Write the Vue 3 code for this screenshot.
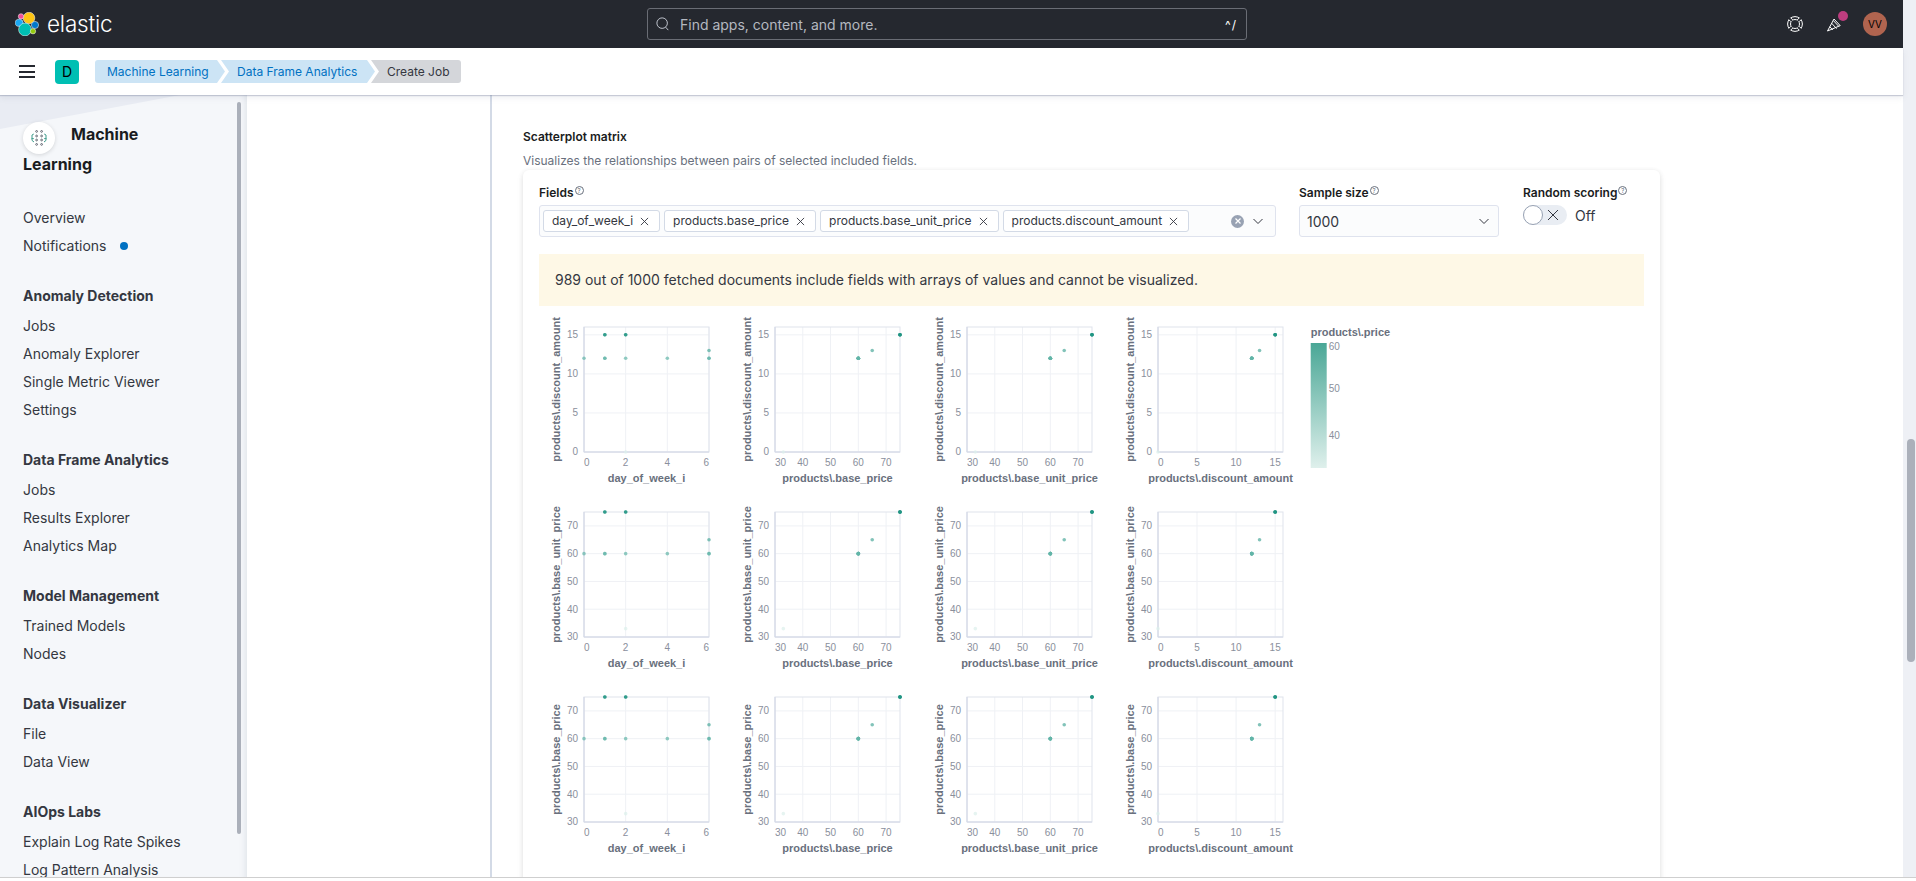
<template>
  <div class="app">
    <div class="window">
      <header class="topbar">
        <div class="brand">
          <svg class="logo" width="24" height="24" viewBox="0 0 24 24" stroke="#fff" stroke-width=".5">
            <circle cx="14" cy="6" r="5.8" fill="#fec514" />
            <circle cx="6" cy="4.4" r="2.7" fill="#f04e98" />
            <ellipse cx="4.2" cy="10.8" rx="4" ry="3.6" fill="#1ba9f5" />
            <circle cx="20" cy="13" r="3.6" fill="#0077cc" />
            <circle cx="10" cy="17.5" r="6.4" fill="#00bfb3" />
            <circle cx="18" cy="19.2" r="2.7" fill="#93c90e" />
          </svg>
          <span class="wordmark">elastic</span>
        </div>
        <div class="search">
          <svg width="14" height="14" viewBox="0 0 16 16" fill="none" stroke="#c5c9d2" stroke-width="1.1">
            <circle cx="7" cy="7" r="6" />
            <path d="M11 11.6 14 15" />
          </svg>
          <span class="search-text">Find apps, content, and more.</span>
          <span class="search-key">^/</span>
        </div>
        <div class="top-icons">
          <svg width="16" height="16" viewBox="0 0 16 16" fill="none" stroke="#fff" stroke-width="1">
            <circle cx="8" cy="8" r="7.4" />
            <circle cx="8" cy="8" r="4.5" />
            <path d="M5 5 2 2M11 5l3-3M5 11l-3 3M11 11l3 3" stroke="#25282f" stroke-width="2.2" />
            <path d="M5.74 3.9 3.62 1.78M3.9 5.74 1.78 3.62M10.26 3.9l2.12-2.12M12.1 5.74l2.12-2.12M5.74 12.1l-2.12 2.12M3.9 10.26l-2.12 2.12M10.26 12.1l2.12 2.12M12.1 10.26l2.12 2.12" />
          </svg>
          <div class="news">
            <svg width="16" height="16" viewBox="0 0 16 16" fill="none" stroke="#fff" stroke-width="1">
              <path d="M.5 15 7 3l6.2 6.6Z" />
              <path d="M4.6 7.2l5 5.4M2.8 10.8l3 3.2M6.4 4.6l5.4 5.8" />
            </svg>
            <span class="news-badge"></span>
          </div>
          <div class="avatar">VV</div>
        </div>
      </header>

      <div class="subbar">
        <button class="burger" aria-label="Menu"><span></span><span></span><span></span></button>
        <div class="space-tile">D</div>
        <nav class="crumbs">
          <a class="crumb first">Machine Learning</a>
          <a class="crumb mid">Data Frame Analytics</a>
          <span class="crumb last">Create Job</span>
        </nav>
      </div>

      <div class="body">
        <aside class="sidenav">
          <svg class="side-deco" width="180" height="36" viewBox="0 0 180 36">
            <polygon points="0,0 180,0 0,34" fill="#e9ecf3" />
          </svg>
          <div class="side-scroll"></div>
          <h2 class="side-title">
            <span class="ml-badge">
              <svg width="16" height="16" viewBox="0 0 16 16" fill="none">
                <g stroke="#4a4f5a" stroke-width=".8">
                  <circle cx="5.6" cy="1.4" r=".9" /><circle cx="10.6" cy="1.4" r=".9" />
                  <circle cx="5.6" cy="6" r=".9" /><circle cx="10.6" cy="6" r=".9" />
                  <circle cx="5.6" cy="10" r=".9" /><circle cx="10.6" cy="10" r=".9" />
                  <circle cx="5.6" cy="14.4" r=".9" /><circle cx="10.6" cy="14.4" r=".9" />
                </g>
                <path d="M2.8 4 1 5v5.4l2 1.6M13.2 4l1.8 1v5.4L13 12M.6 8.6h2.2M15.4 8.6h-2.2" stroke="#3f9c8c" stroke-width="1" />
              </svg>
            </span>Machine Learning
          </h2>
          <div v-for="group in navGroups" :key="group.title" class="side-group">
            <h3 v-if="group.title">{{ group.title }}</h3>
            <a v-for="item in group.items" :key="item" class="side-item">
              {{ item }}<i v-if="item === 'Notifications'" class="dot"></i>
            </a>
          </div>
        </aside>

        <main class="main">
          <div class="steps-col"></div>
          <section class="content">
            <h4 class="sec-title">Scatterplot matrix</h4>
            <p class="sec-desc">Visualizes the relationships between pairs of selected included fields.</p>

            <div class="card">
              <div class="controls">
                <div class="ctl ctl-fields">
                  <label>Fields<span class="hint">?</span></label>
                  <div class="combo">
                    <span v-for="f in fields" :key="f" class="chip">
                      {{ f }}
                      <svg width="9" height="9" viewBox="0 0 10 10" stroke="#343741" stroke-width="1"><path d="M1 1l8 8M9 1 1 9" /></svg>
                    </span>
                    <span class="combo-end">
                      <span class="clear">
                        <svg width="8" height="8" viewBox="0 0 8 8" stroke="#fff" stroke-width="1.2"><path d="M1.5 1.5l5 5M6.5 1.5l-5 5" /></svg>
                      </span>
                      <svg class="chev" width="12" height="12" viewBox="0 0 12 12" fill="none" stroke="#343741" stroke-width="1"><path d="M1.5 4 6 8.5 10.5 4" /></svg>
                    </span>
                  </div>
                </div>
                <div class="ctl ctl-sample">
                  <label>Sample size<span class="hint">?</span></label>
                  <div class="select">
                    1000
                    <svg class="chev" width="12" height="12" viewBox="0 0 12 12" fill="none" stroke="#343741" stroke-width="1"><path d="M1.5 4 6 8.5 10.5 4" /></svg>
                  </div>
                </div>
                <div class="ctl ctl-random">
                  <label>Random scoring<span class="hint">?</span></label>
                  <div class="switch-row">
                    <span class="switch">
                      <span class="knob"></span>
                      <svg width="12" height="12" viewBox="0 0 12 12" stroke="#343741" stroke-width="1"><path d="M1 1l10 10M11 1 1 11" /></svg>
                    </span>
                    <span class="switch-label">Off</span>
                  </div>
                </div>
              </div>

              <div class="callout">989 out of 1000 fetched documents include fields with arrays of values and cannot be visualized.</div>

              <div class="matrix">
                <template v-for="(row, r) in rows" :key="row.key">
                  <svg v-for="col in cols" :key="row.key + col.key" class="cell" width="191.33" height="185" viewBox="0 0 191.33 185">
                    <g transform="translate(45 10)">
                      <line v-for="t in col.ticks" :key="'x' + t" :x1="sx(col, t)" :x2="sx(col, t)" y1="0" y2="125" class="grid" />
                      <line v-for="t in row.ticks" :key="'y' + t" x1="0" x2="125" :y1="sy(row, t)" :y2="sy(row, t)" class="grid" />
                      <rect x="0" y="0" width="125" height="125" class="plot-frame" />
                      <line x1="0" x2="0" y1="0" y2="125" class="axis" />
                      <line x1="0" x2="125" y1="125" y2="125" class="axis" />
                      <circle v-for="(d, i) in docs" :key="i" :cx="sx(col, d[col.key])" :cy="sy(row, d[row.key])" r="1.8" :fill="colorFor(d.price)" opacity="0.7" />
                      <text v-for="(t, i) in col.ticks" :key="'xl' + t" :x="sx(col, t)" y="139" :text-anchor="xAnchor(col, i)" class="tick">{{ t }}</text>
                      <text v-for="t in row.ticks" :key="'yl' + t" x="-6" :y="sy(row, t) + 3.5" text-anchor="end" class="tick">{{ t }}</text>
                      <text x="62.5" y="155" text-anchor="middle" class="title">{{ col.label }}</text>
                      <text transform="translate(-24 62.5) rotate(-90)" text-anchor="middle" class="title">{{ row.label }}</text>
                    </g>
                  </svg>
                  <svg v-if="r === 0" class="cell" width="110" height="185" viewBox="0 0 110 185">
                    <defs>
                      <linearGradient id="legendGrad" x1="0" y1="0" x2="0" y2="1">
                        <stop offset="0" stop-color="#4aa796" />
                        <stop offset="1" stop-color="#dff0ec" />
                      </linearGradient>
                    </defs>
                    <text x="6.7" y="19" class="title">products\.price</text>
                    <rect x="6.7" y="26" width="16" height="125" fill="url(#legendGrad)" />
                    <text x="24.7" y="33.2" class="tick">60</text>
                    <text x="24.7" y="74.8" class="tick">50</text>
                    <text x="24.7" y="121.5" class="tick">40</text>
                  </svg>
                  <div v-else class="cell"></div>
                </template>
              </div>
            </div>
          </section>
        </main>
      </div>
    </div>

    <div class="page-scroll"><div class="page-thumb"></div></div>
  </div>
</template>

<script setup>
const navGroups = [
  { title: '', items: ['Overview', 'Notifications'] },
  { title: 'Anomaly Detection', items: ['Jobs', 'Anomaly Explorer', 'Single Metric Viewer', 'Settings'] },
  { title: 'Data Frame Analytics', items: ['Jobs', 'Results Explorer', 'Analytics Map'] },
  { title: 'Model Management', items: ['Trained Models', 'Nodes'] },
  { title: 'Data Visualizer', items: ['File', 'Data View'] },
  { title: 'AIOps Labs', items: ['Explain Log Rate Spikes', 'Log Pattern Analysis'] }
]

const fields = ['day_of_week_i', 'products.base_price', 'products.base_unit_price', 'products.discount_amount']

const priceScale = { min: 30, max: 75, ticks: [30, 40, 50, 60, 70] }
const discScale = { min: 0, max: 16, ticks: [0, 5, 10, 15] }

const cols = [
  { key: 'dow', label: 'day_of_week_i', min: 0, max: 6, ticks: [0, 2, 4, 6] },
  { key: 'base', label: 'products\\.base_price', ...priceScale },
  { key: 'unit', label: 'products\\.base_unit_price', ...priceScale },
  { key: 'disc', label: 'products\\.discount_amount', ...discScale }
]

const rows = [
  { key: 'disc', label: 'products\\.discount_amount', ...discScale },
  { key: 'unit', label: 'products\\.base_unit_price', ...priceScale },
  { key: 'base', label: 'products\\.base_price', ...priceScale }
]

// documents that survive the array filter
const docs = [
  [0, 60, 12], [1, 60, 12], [1, 60, 12], [2, 60, 12], [4, 60, 12], [6, 60, 12], [6, 60, 12],
  [6, 65, 13], [1, 75, 15], [1, 75, 15], [2, 75, 15], [2, 75, 15], [2, 33, 0]
].map(([dow, base, disc]) => ({ dow, base, unit: base, disc, price: base }))

const sx = (scale, v) => ((v - scale.min) / (scale.max - scale.min)) * 125
const sy = (scale, v) => 125 - ((v - scale.min) / (scale.max - scale.min)) * 125

// first and last x labels stay inside the plot
const xAnchor = (col, i) => {
  if (i === 0) return 'start'
  if (col.key === 'dow' && i === col.ticks.length - 1) return 'end'
  return 'middle'
}

function colorFor(price) {
  const k = Math.min(1, Math.max(0, (price - 33) / 42))
  const mix = (a, b) => Math.round(a + (b - a) * k)
  return `rgb(${mix(220, 32)},${mix(240, 148)},${mix(235, 130)})`
}
</script>

<style>
html, body { margin: 0; background: #fff; overflow: hidden; }
</style>

<style scoped>
.app { height: 878px; display: flex; overflow: hidden; border-bottom: 1px solid #cfcfcf; box-sizing: border-box; font-family: Inter, "Noto Sans", sans-serif; color: #343741; }
.window { flex: 1; min-width: 0; display: flex; flex-direction: column; }

.topbar { height: 48px; flex: none; background: #25282f; display: flex; align-items: center; }
.brand { display: flex; align-items: center; margin-left: 15px; width: 632px; }
.wordmark { margin-left: 8px; color: #fff; font-size: 22.5px; font-weight: 300; line-height: 24px; letter-spacing: -0.2px; }
.search { width: 600px; height: 32px; box-sizing: border-box; border: 1px solid #6a6d75; border-radius: 3px; background: #25282f; display: flex; align-items: center; padding: 0 9px 0 8px; }
.search-text { margin-left: 10px; color: #b4b8c0; font-size: 14px; flex: 1; }
.search-key { color: #fff; font-size: 12px; letter-spacing: 1px; }
.top-icons { margin-left: auto; display: flex; align-items: center; margin-right: 16px; }
.top-icons > svg { margin-right: 24px; }
.news { position: relative; width: 16px; height: 16px; margin-right: 20px; }
.news-badge { position: absolute; width: 10px; height: 10px; border-radius: 50%; background: #bd3d7f; top: -5px; left: 11px; }
.avatar { width: 24px; height: 24px; border-radius: 50%; background: #b0644f; color: #000; font-size: 10px; line-height: 24px; text-align: center; }

.subbar { height: 47px; flex: none; background: #fff; display: flex; align-items: center; box-shadow: 0 1px 1px rgba(100, 110, 140, .3), 0 3px 6px rgba(100, 110, 140, .1); position: relative; z-index: 2; }
.burger { border: 0; background: none; padding: 0; margin-left: 19px; width: 16px; display: flex; flex-direction: column; gap: 3.5px; }
.burger span { display: block; height: 2px; background: #25282f; }
.space-tile { margin-left: 20px; width: 24px; height: 24px; border-radius: 4px; background: #00bfb3; color: #000; font-size: 14px; line-height: 24px; text-align: center; }
.crumbs { margin-left: 16px; display: flex; height: 23px; font-size: 12px; line-height: 23px; }
.crumb { display: block; white-space: nowrap; }
.first { width: 130px; box-sizing: border-box; padding-left: 12px; background: #cce4f5; color: #0071c2; border-radius: 3px 0 0 3px; clip-path: polygon(0 0, 122px 0, 130px 50%, 122px 100%, 0 100%); }
.mid { width: 154px; margin-left: -4px; box-sizing: border-box; padding-left: 16px; background: #cce4f5; color: #0071c2; clip-path: polygon(0 0, 146px 0, 154px 50%, 146px 100%, 0 100%, 8px 50%); }
.last { width: 90px; margin-left: -4px; box-sizing: border-box; padding-left: 16px; background: #d4d6da; color: #343741; border-radius: 0 3px 3px 0; clip-path: polygon(0 0, 100% 0, 100% 100%, 0 100%, 8px 50%); }

.body { flex: 1; min-height: 0; display: flex; }

.sidenav { width: 247px; flex: none; box-sizing: border-box; background: #f5f7fa; position: relative; padding: 24px 0 0 23px; overflow: hidden; box-shadow: inset -7px 0 6px -6px rgba(152, 162, 179, .25); }
.side-deco { position: absolute; left: 0; top: 0; }
.side-scroll { position: absolute; left: 237px; top: 7px; width: 4px; height: 732px; background: #abb0ba; border-radius: 2px; }
.side-title { position: relative; margin: 0; font-size: 16px; font-weight: 700; line-height: 30px; width: 160px; color: #1a1c21; }
.ml-badge { display: inline-flex; align-items: center; justify-content: center; width: 32px; height: 32px; border-radius: 50%; background: #fff; box-shadow: 0 1px 4px rgba(0, 0, 0, .14); vertical-align: middle; margin: -1px 16px -5px 0; }
.side-group { position: relative; margin-bottom: 22px; }
.side-title + .side-group { margin-top: 25px; }
.side-group h3 { margin: 0 0 2px; height: 28px; font-size: 14px; line-height: 28px; font-weight: 700; color: #343741; }
.side-item { display: block; height: 28px; font-size: 14px; line-height: 28px; color: #343741; white-space: nowrap; }
.dot { display: inline-block; width: 8px; height: 8px; border-radius: 50%; background: #0071c2; margin-left: 13px; vertical-align: 1px; }

.main { flex: 1; min-width: 0; display: flex; }
.steps-col { width: 243px; flex: none; border-right: 2px solid #d3dae6; }
.content { flex: 1; padding: 32px 0 0 31px; box-sizing: border-box; }
.sec-title { margin: 0; font-size: 12px; font-weight: 600; line-height: 20px; color: #1a1c21; }
.sec-desc { margin: 4px 0 0; font-size: 12px; line-height: 20px; color: #69707d; }
.card { margin-top: -1px; width: 1137px; box-sizing: border-box; background: #fff; border-radius: 6px; padding: 13px 16px 0; height: 740px; box-shadow: 0 1px 5px rgba(0, 0, 0, .1), 0 3px 8px rgba(0, 0, 0, .05); }

.controls { display: flex; }
.ctl label { display: block; font-size: 12px; font-weight: 600; line-height: 20px; color: #1a1c21; height: 22px; white-space: nowrap; }
.hint { display: inline-block; width: 9px; height: 9px; box-sizing: border-box; border: 1px solid #69707d; border-radius: 50%; font-size: 6px; line-height: 7px; text-align: center; font-weight: 400; color: #69707d; margin-left: 1px; vertical-align: 4px; }
.ctl-fields { width: 737px; margin-right: 23px; }
.ctl-sample { width: 200px; margin-right: 24px; }
.combo, .select { height: 32px; box-sizing: border-box; border: 1px solid #dfe3ee; border-radius: 3px; background: #fbfcfd; display: flex; align-items: center; }
.combo { padding-left: 3px; gap: 4px; }
.chip { height: 22px; box-sizing: border-box; border: 1px solid #d3dae6; border-radius: 3px; background: #fff; padding: 0 10px 0 8px; font-size: 12px; line-height: 20px; display: flex; align-items: center; gap: 7px; white-space: nowrap; color: #343741; }
.combo-end { margin-left: auto; display: flex; align-items: center; margin-right: 11px; gap: 8px; }
.clear { width: 13px; height: 13px; border-radius: 50%; background: #98a2b3; display: flex; align-items: center; justify-content: center; }
.select { padding: 0 8px 0 7px; font-size: 14px; justify-content: space-between; }
.switch-row { display: flex; align-items: center; }
.switch { width: 44px; height: 20px; border-radius: 10px; background: #e9edf3; display: flex; align-items: center; }
.knob { width: 20px; height: 20px; box-sizing: border-box; border: 1px solid #98a2b3; border-radius: 50%; background: #fff; margin-right: 4px; flex: none; }
.switch-label { margin-left: 8px; font-size: 14px; color: #343741; }

.callout { margin: 17px 0 0; height: 52px; box-sizing: border-box; background: #fef8e6; padding: 0 16px; font-size: 14px; line-height: 52px; white-space: nowrap; color: #343741; }

.matrix { margin-top: 11px; display: grid; grid-template-columns: repeat(4, 191.33px) 110px; grid-auto-rows: 185px; }
.cell { display: block; }
.grid { stroke: #eff1f5; stroke-width: 1; }
.plot-frame { fill: none; stroke: #dfe3ec; stroke-width: 1; }
.axis { stroke: #d3d8e6; stroke-width: 1; }
.tick { font-family: "Liberation Sans", Arial, sans-serif; font-size: 10px; fill: #8a8f9c; }
.title { font-family: "Liberation Sans", Arial, sans-serif; font-size: 11px; font-weight: 700; fill: #69707d; }

.page-scroll { width: 13px; flex: none; background: #eef0f5; padding: 439px 1px 0 4px; box-sizing: border-box; }
.page-thumb { height: 223px; background: #abb0ba; border-radius: 4px; }
</style>
